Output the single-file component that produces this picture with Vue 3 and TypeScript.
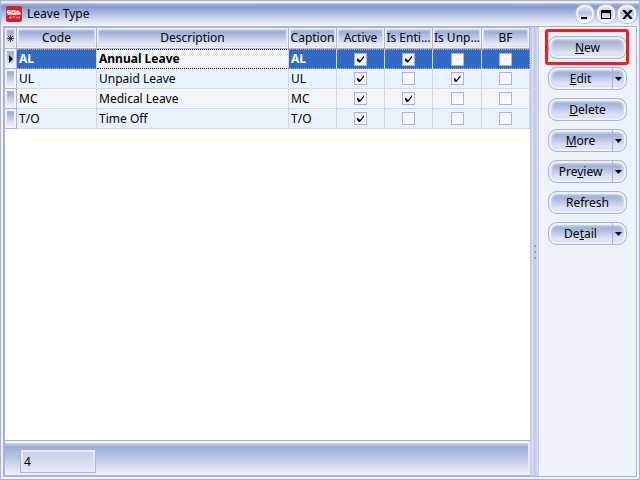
<script setup lang="ts">
interface LeaveType {
  code: string
  description: string
  caption: string
  flags: boolean[]
}

interface Action {
  before: string
  key: string
  after: string
  split: boolean
  highlighted?: boolean
}

const flagNames: string[] = ['Active', 'Is Enti...', 'Is Unp...', 'BF']

const rows: LeaveType[] = [
  { code: 'AL', description: 'Annual Leave', caption: 'AL', flags: [true, true, false, false] },
  { code: 'UL', description: 'Unpaid Leave', caption: 'UL', flags: [true, false, true, false] },
  { code: 'MC', description: 'Medical Leave', caption: 'MC', flags: [true, true, false, false] },
  { code: 'T/O', description: 'Time Off', caption: 'T/O', flags: [true, false, false, false] },
]

const actions: Action[] = [
  { before: '', key: 'N', after: 'ew', split: false, highlighted: true },
  { before: '', key: 'E', after: 'dit', split: true },
  { before: '', key: 'D', after: 'elete', split: false },
  { before: '', key: 'M', after: 'ore', split: true },
  { before: 'Pre', key: 'v', after: 'iew', split: true },
  { before: 'Refresh', key: '', after: '', split: false },
  { before: 'De', key: 't', after: 'ail', split: true },
]
</script>

<template>
  <div class="window">
    <header class="titlebar">
      <svg class="logo" viewBox="0 0 16 16" aria-hidden="true">
        <rect width="16" height="16" rx="2" fill="#d81f2c" />
        <path d="M1.500 4.700h3M1.500 5v1.500h3v1.700h-3M6 5h3v3.200H6zM8 7l1.500 2M11 4.500v3.700h2M12 5l2.500 3.500" fill="none" stroke="#fff" stroke-width="1.300" />
        <path d="M3 11.500h3M7 11h2M10 11.500h4" stroke="#f58bb0" stroke-width="1.500" />
      </svg>
      <h1 class="title">Leave Type</h1>
      <div class="controls">
        <button type="button" class="control" aria-label="Minimize">
          <svg viewBox="0 0 18 18"><path d="M5 12h6v2H5z" /></svg>
        </button>
        <button type="button" class="control" aria-label="Maximize">
          <svg viewBox="0 0 18 18"><path d="M4 5h10v9H4zM5 8v5h8V8z" fill-rule="evenodd" /></svg>
        </button>
        <button type="button" class="control" aria-label="Close">
          <svg viewBox="0 0 18 18"><path d="M4.500 5h2.500l2.500 3L12 5h2.500v.5l-3.500 4 3.500 4v.5H12l-2.500-3L7 14H4.500v-.5l3.500-4-3.500-4z" /></svg>
        </button>
      </div>
    </header>

    <div class="body">
      <main class="grid">
        <div class="rows">
          <table>
            <colgroup>
              <col class="c-mark" /><col class="c-code" /><col /><col class="c-flag" />
              <col class="c-flag" /><col class="c-flag" /><col class="c-wide" /><col class="c-flag" />
            </colgroup>
            <thead>
              <tr>
                <th class="mark">
                  <svg class="star" viewBox="0 0 7 7" aria-hidden="true"><path d="M3.500 0v7M0 3.500h7M1 1l5 5M6 1L1 6" stroke="#222" stroke-width=".8" /></svg>
                </th>
                <th>Code</th>
                <th>Description</th>
                <th>Caption</th>
                <th v-for="name in flagNames" :key="name">{{ name }}</th>
              </tr>
            </thead>
            <tbody>
              <tr v-for="(row, i) in rows" :key="row.code" :class="{ selected: i === 0 }">
                <td class="mark">
                  <svg v-if="i === 0" class="pointer" viewBox="0 0 4 8" aria-hidden="true"><path d="M0 0l4 4-4 4z" /></svg>
                </td>
                <td>{{ row.code }}</td>
                <td class="description">{{ row.description }}</td>
                <td>{{ row.caption }}</td>
                <td v-for="(flag, f) in row.flags" :key="f" class="flag">
                  <input type="checkbox" :checked="flag" :aria-label="`${row.code} ${flagNames[f]}`" />
                </td>
              </tr>
            </tbody>
          </table>
        </div>
        <footer class="footer">
          <input class="count" type="text" readonly :value="rows.length" aria-label="Record count" />
        </footer>
      </main>

      <div class="splitter"><i /><i /><i /></div>

      <aside class="panel">
        <div v-for="a in actions" :key="a.before + a.key" class="action" :class="{ highlighted: a.highlighted }">
          <button type="button" class="push"><span>{{ a.before }}<u v-if="a.key">{{ a.key }}</u>{{ a.after }}</span></button>
          <button v-if="a.split" type="button" class="drop" :aria-label="`${a.before}${a.key}${a.after} options`">
            <svg viewBox="0 0 7 4"><path d="M0 0h7L3.500 4z" /></svg>
          </button>
        </div>
      </aside>
    </div>
  </div>
</template>

<style>
body {
  margin: 0;
}
</style>

<style scoped>
* {
  box-sizing: border-box;
}

.window {
  --line: #a9b1de;
  --soft: #ced6f0;
  --face: linear-gradient(#c3cce8 0, #9dacd8 20%, #b4c0e1 40%, #dfe5f3 75%, #eff2fa 100%);
  display: flex;
  flex-direction: column;
  min-height: 100vh;
  padding: 0 2px 2px;
  border: 1px solid var(--line);
  background: #f3f5fc;
  color: #000;
  font: 12px/16px "Noto Sans", "Open Sans", sans-serif;
}

button,
input {
  margin: 0;
  padding: 0;
  font: inherit;
  color: inherit;
}

.titlebar {
  display: flex;
  align-items: center;
  height: 25px;
  margin: 0 -2px;
  padding: 0 3px 0 5px;
  background: linear-gradient(#e9edf8 0, #e9edf8 2px, #a0aedb 3px, #8599ce 6px, #a5b3dc 11px, #d6ddf0 19px, #f3f5fc 25px);
}

.logo {
  width: 16px;
  height: 16px;
}

.title {
  flex: 1;
  margin: 0 0 0 5px;
  font-size: 12px;
  font-weight: 400;
}

.controls {
  display: flex;
  gap: 3px;
}

.control {
  width: 18px;
  height: 18px;
  border: 2px solid #f3f5fc;
  border-radius: 8px;
  background: linear-gradient(#dfe5f4, #b9c4e5 40%, #f3f5fb);
  box-shadow: 0 0 0 1px #b6bfe3;
}

.control svg {
  display: block;
  width: 18px;
  height: 18px;
  margin: -2px;
}

.body {
  flex: 1;
  display: flex;
  border: 1px solid var(--line);
}

.grid {
  flex: 1;
  min-width: 0;
  display: flex;
  flex-direction: column;
  border-left: 1px solid var(--line);
  border-top: 1px solid var(--line);
  border-bottom: 1px solid var(--line);
}

.rows {
  flex: 1;
  background: #fff;
}

table {
  width: 100%;
  table-layout: fixed;
  border-collapse: separate;
  border-spacing: 0;
}

.c-mark { width: 12px; }
.c-code { width: 80px; }
.c-flag { width: 48px; }
.c-wide { width: 49px; }

th,
td {
  height: 20px;
  padding: 0 2px;
  overflow: hidden;
  white-space: nowrap;
  border-right: 1px solid var(--soft);
  border-bottom: 1px solid var(--soft);
  text-align: left;
}

th {
  height: 21px;
  padding: 0;
  border-color: var(--line);
  background: var(--face);
  box-shadow: inset 0 0 0 1px #f0f3fb, inset 0 0 1px 2px #dde3f3;
  font-weight: 400;
  text-align: center;
}

tbody tr {
  background: #f2f5fa;
}

tbody tr:nth-child(even) {
  background: #e8f3fe;
}

tbody .mark {
  border-color: var(--line);
  background: var(--face);
  box-shadow: inset 0 0 0 2px #f0f3fb;
}

.mark {
  padding: 0;
  line-height: 0;
  text-align: center;
}

.star {
  width: 7px;
  height: 7px;
}

.pointer {
  width: 4px;
  height: 8px;
}

.selected td:not(.mark) {
  border-bottom: 1px dotted #e3a65b;
  border-top: 1px dotted #e3a65b;
  background: #316ac5;
  color: #fff;
  font-weight: 700;
}

.selected td:last-child {
  border-right: 1px dotted #e3a65b;
}

.selected td.description {
  border-top-color: #000;
  border-bottom-color: #000;
  background: #f2f5fa;
  color: #000;
}

.flag {
  padding: 0;
  line-height: 0;
  text-align: center;
}

.flag input {
  appearance: none;
  display: inline-block;
  width: 13px;
  height: 13px;
  padding: 2px;
  border: 1px solid var(--line);
  background: linear-gradient(135deg, #f1f3f9, #fff);
  vertical-align: middle;
}

.flag input:checked::before {
  content: "";
  display: block;
  width: 7px;
  height: 7px;
  background: #000;
  clip-path: polygon(0 3px, 1px 3px, 3px 5px, 7px 0, 7px 2px, 3px 7px, 2px 7px, 0 5px);
}

.footer {
  display: flex;
  height: 35px;
  padding: 8px 15px 2px;
  border-top: 1px solid var(--line);
  background: linear-gradient(#f3f5fc 0, #f3f5fc 2px, #b9c4e5 3px, #9dacd8 6px, #b8c4e3 16px, #dee4f3 28px, #f0f2fa 34px);
  box-shadow: inset -2px 0 #e7ebf6;
}

.count {
  width: 76px;
  height: 24px;
  padding: 0 3px;
  border: 1px solid var(--line);
  background: linear-gradient(#c4cde8, #e5eaf5);
  box-shadow: inset 0 0 0 2px #e7ebf6;
}

.splitter {
  display: flex;
  flex-direction: column;
  align-items: center;
  justify-content: center;
  gap: 4px;
  width: 9px;
  border: 1px solid #c3cce9;
  border-width: 1px 1px 1px 2px;
  background: linear-gradient(90deg, #dce2f3 0, #dce2f3 1px, #bfc9e8 2px, #c9d2ec 5px, #eef1fa 6px);
}

.splitter i {
  width: 2px;
  height: 2px;
  background: #8f9ccd;
}

.panel {
  display: flex;
  flex-direction: column;
  gap: 8px;
  width: 97px;
  padding: 9px 9px 9px 9px;
  background: #eef2fa;
}

.action {
  position: relative;
  display: flex;
  height: 23px;
  border: 1px solid var(--line);
  border-radius: 9px;
  background: var(--face);
  box-shadow: inset 0 0 0 2px #edf1fa, inset 0 0 3px 3px #d5dcef;
}

.highlighted::after {
  content: "";
  position: absolute;
  inset: -8px -3px -7px -4px;
  border: 3px solid #fb1a14;
  border-radius: 3px;
  pointer-events: none;
}

.push,
.drop {
  border: 0;
  background: none;
}

.push {
  flex: 1;
  line-height: 16px;
}

.drop {
  width: 14px;
  padding-right: 2px;
  border-left: 1px solid var(--line);
}

.drop svg {
  display: block;
  width: 7px;
  height: 4px;
  margin: 0 auto;
}

u {
  text-underline-offset: 1px;
}
</style>
